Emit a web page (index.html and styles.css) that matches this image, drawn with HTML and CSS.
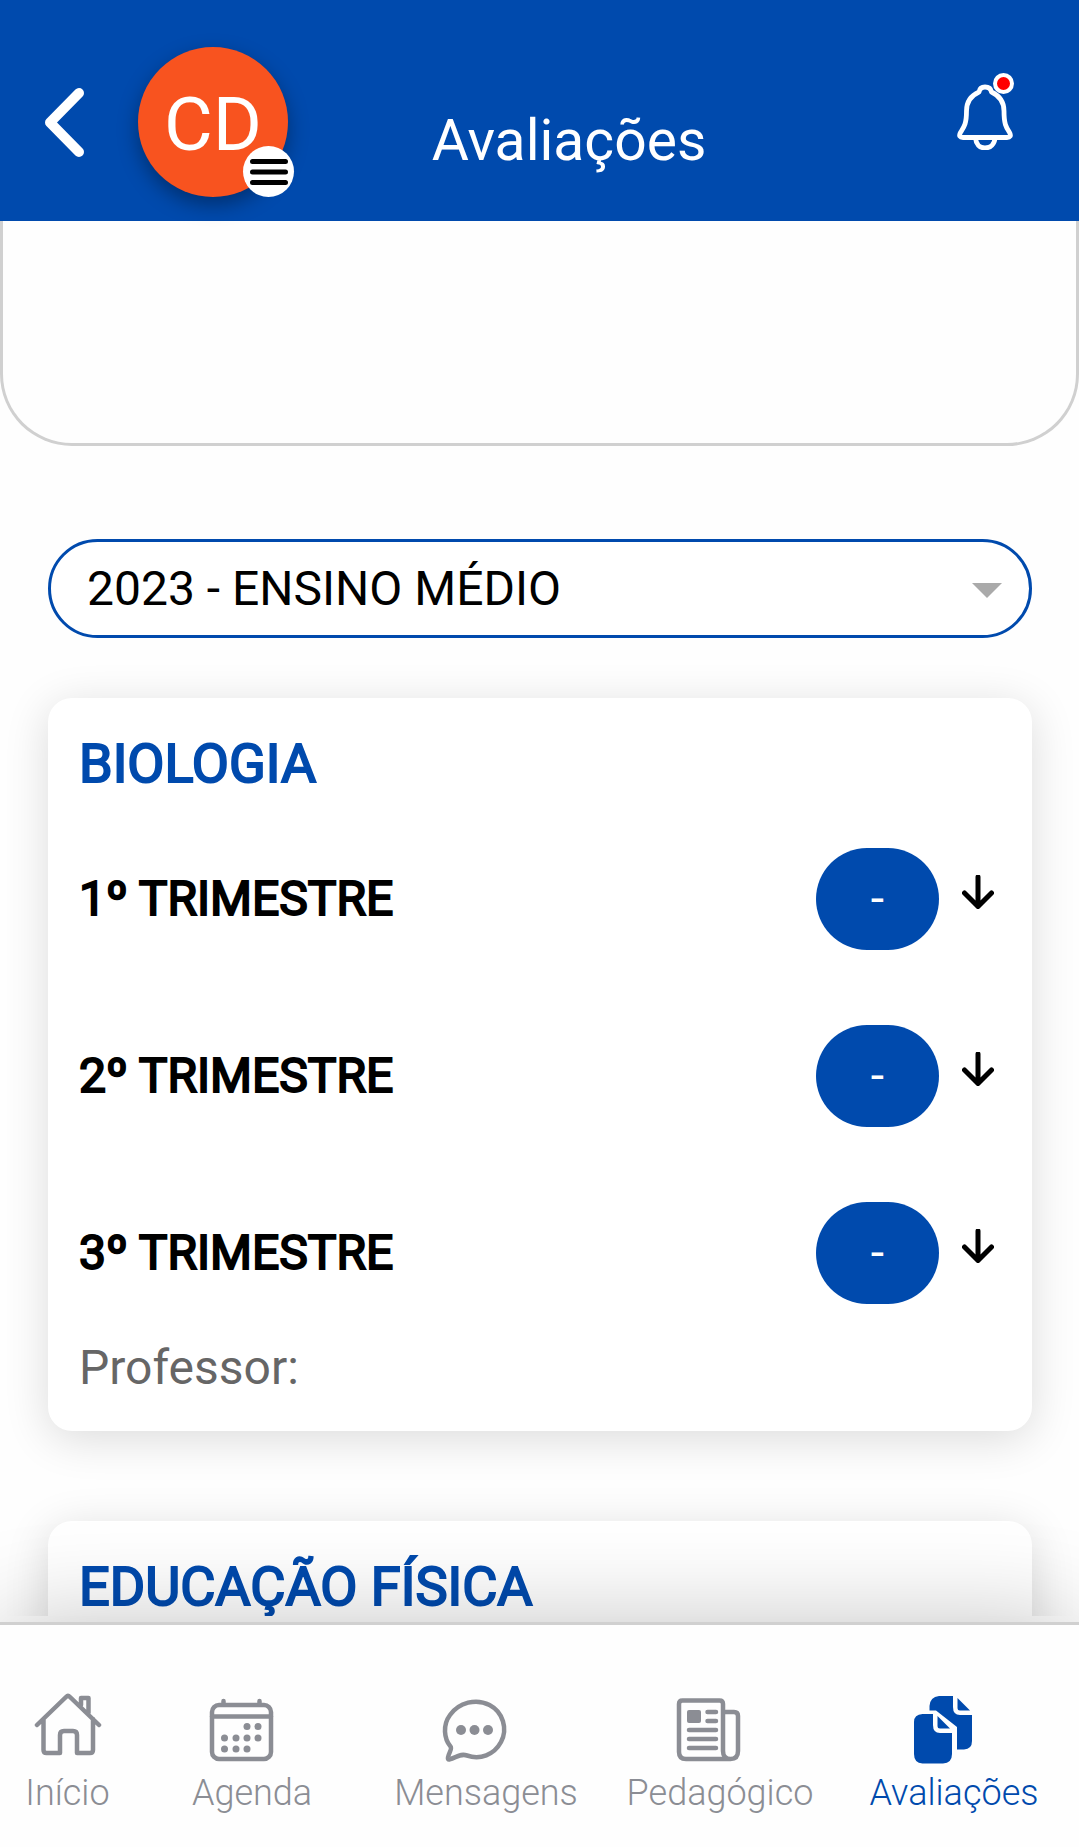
FILE: index.html
```html
<!DOCTYPE html>
<html lang="pt-BR">
<head>
<meta charset="utf-8">
<meta name="viewport" content="width=device-width, initial-scale=1">
<title>Avaliações</title>
<link rel="stylesheet" href="styles.css">
</head>
<body>
<header class="topbar">
  <div class="topbar-side">
    <button class="icon-button" type="button" aria-label="Voltar">
      <svg width="40" height="70" viewBox="0 0 40 70" fill="none" stroke="#fff" stroke-width="10" stroke-linecap="round" stroke-linejoin="round"><path d="M34 6L5 35.500L34 65"/></svg>
    </button>
    <button class="avatar" type="button" aria-label="Perfil CD">
      <span>CD</span>
      <span class="avatar-menu">
        <svg width="38" height="26" viewBox="0 0 38 26" stroke="#000" stroke-width="5" stroke-linecap="round"><path d="M2.500 2.500H35.500M2.500 13H35.500M2.500 23.500H35.500"/></svg>
      </span>
    </button>
  </div>
  <h1 class="topbar-title">Avaliações</h1>
  <div class="topbar-side topbar-end">
    <button class="icon-button" type="button" aria-label="Notificações">
      <svg width="60" height="78" viewBox="0 0 60 78" fill="none" stroke="#fff" stroke-width="4.800" stroke-linecap="round" stroke-linejoin="round"><path d="M28 15C24.500 15 22.500 17 22 20C13 24 9.500 30 9.500 39C9.500 52 7 55 3.500 60.500C1.500 64 3 65.500 6 65.500H50C53 65.500 54.500 64 52.500 60.500C49 55 47 52 47 39C47 30 43 24 34.500 20C34 17 31.500 15 28 15Z"/><path d="M18.500 66C19 72 22.500 76 28 76S37.500 72 38 66"/><circle cx="46.500" cy="11.500" r="8.500" fill="#f00" stroke-width="4"/></svg>
    </button>
  </div>
</header>

<main class="content">
  <section class="panel" aria-label="Resumo"></section>
  <div class="period">
    <select class="period-select" aria-label="Período letivo">
      <option>2023 - ENSINO MÉDIO</option>
    </select>
  </div>

  <article class="card">
    <h2 class="card-title">BIOLOGIA</h2>
    <ul class="terms">
      <li class="term">
        <span class="term-name">1º TRIMESTRE</span>
        <span class="grade">-</span>
        <button class="icon-button term-toggle" type="button" aria-label="Abrir 1º trimestre"><svg class="arrow" viewBox="0 0 32 34"><path d="M16 2V31M2.500 18L16 31.500L29.500 18"/></svg></button>
      </li>
      <li class="term">
        <span class="term-name">2º TRIMESTRE</span>
        <span class="grade">-</span>
        <button class="icon-button term-toggle" type="button" aria-label="Abrir 2º trimestre"><svg class="arrow" viewBox="0 0 32 34"><path d="M16 2V31M2.500 18L16 31.500L29.500 18"/></svg></button>
      </li>
      <li class="term">
        <span class="term-name">3º TRIMESTRE</span>
        <span class="grade">-</span>
        <button class="icon-button term-toggle" type="button" aria-label="Abrir 3º trimestre"><svg class="arrow" viewBox="0 0 32 34"><path d="M16 2V31M2.500 18L16 31.500L29.500 18"/></svg></button>
      </li>
    </ul>
    <p class="teacher">Professor:</p>
  </article>

  <article class="card">
    <h2 class="card-title">EDUCAÇÃO FÍSICA</h2>
  </article>
</main>

<nav class="tabs" aria-label="Principal">
  <a class="tab tab-home" href="#inicio">
    <svg class="tab-icon" viewBox="0 0 68 72" stroke-width="4.500"><path d="M3 33L32 5Q34 3 36 5L65 33M9.500 27V58Q9.500 61 12.500 61H26V43Q26 39 30 39H39Q43 39 43 43V61H56Q59 61 59 58V27M47 13V6H54.500V21"/></svg>
    <span>Início</span>
  </a>
  <a class="tab" href="#agenda">
    <svg class="tab-icon" viewBox="0 0 68 72" stroke-width="4.500"><rect x="5" y="13" width="59" height="54" rx="7"/><path d="M5 24.500H64M16.500 9V12M52.500 9V12"/><g class="solid"><circle cx="40" cy="34.500" r="3.500"/><circle cx="51" cy="34.500" r="3.500"/><circle cx="17.500" cy="46" r="3.500"/><circle cx="29" cy="46" r="3.500"/><circle cx="40" cy="46" r="3.500"/><circle cx="51" cy="46" r="3.500"/><circle cx="17.500" cy="57" r="3.500"/><circle cx="29" cy="57" r="3.500"/><circle cx="40" cy="57" r="3.500"/></g></svg>
    <span>Agenda</span>
  </a>
  <a class="tab" href="#mensagens">
    <svg class="tab-icon" viewBox="0 0 68 72" stroke-width="4.500"><path d="M9.500 54.500C3 47 1.500 33 9 23C18 10.500 35 6 48.500 13C62 20 67 37 60 50C53 63 39 68 26 63.500C20 61.500 17 64.500 8.500 67.500Q6.500 68 7 65.500C8 60 11.500 57 9.500 54.500Z"/><g class="solid"><circle cx="20" cy="38" r="5"/><circle cx="33.500" cy="38" r="5"/><circle cx="47" cy="38" r="5"/></g></svg>
    <span>Mensagens</span>
  </a>
  <a class="tab" href="#pedagogico">
    <svg class="tab-icon" viewBox="0 0 68 72" stroke-width="4.500"><path d="M55 67H11Q4 67 4 60V12Q4 8.500 7.500 8.500H44.500Q48 8.500 48 12V59Q48 67 55.500 67T63 59V24Q63 20 59 20H48"/><path d="M32.500 20H41M32.500 29H41M14 38H41M14 47H41M14 56H41"/><rect class="solid" x="12" y="18" width="14" height="13" rx="2"/></svg>
    <span>Pedagógico</span>
  </a>
  <a class="tab tab-active" href="#avaliacoes" aria-current="page">
    <svg class="tab-icon" viewBox="0 0 68 72"><g class="solid"><path d="M20.500 18.500V14Q21 5 30 4H44V15Q44 23 51 23H63V49Q63 57 55 57.500H48V35L27 18.500Z"/><path d="M48.500 6L61 18.500H51Q48.500 18.500 48.500 16Z"/><path d="M13.500 22H24V33Q24 41 31 41H43V62Q43 71 34 71.500H13.500Q5 71 5 62V30Q5 22.500 13.500 22Z"/><path d="M28.500 24L41 36.500H31Q28.500 36.500 28.500 34Z"/></g></svg>
    <span>Avaliações</span>
  </a>
</nav>
</body>
</html>
```
FILE: styles.css
```css
* {
  box-sizing: border-box;
}

body {
  display: flex;
  flex-direction: column;
  height: 100vh;
  margin: 0;
  background: #fefefe;
  color: #000;
  font-family: Roboto, "Liberation Sans", sans-serif;
}

.icon-button {
  display: flex;
  padding: 0;
  border: 0;
  background: none;
}

/* Top bar */
.topbar {
  display: grid;
  grid-template-columns: 1fr auto 1fr;
  flex: none;
  align-items: center;
  padding: 47px 62px 24px 45px;
  background: #004aad;
  color: #fff;
}

.topbar-side {
  display: flex;
  align-items: center;
  gap: 53px;
}

.topbar-end {
  justify-content: flex-end;
  padding-bottom: 22px;
}

.topbar-title {
  margin: 0;
  padding: 38px 0 0 76px;
  font-size: 57px;
  font-weight: 400;
  line-height: 64px;
}

.avatar {
  position: relative;
  width: 150px;
  height: 150px;
  padding: 3px 0 0;
  border: 0;
  border-radius: 50%;
  background: #f8531f;
  box-shadow: 0 8px 20px rgba(0, 0, 0, 0.35);
  color: #fff;
  font: 400 75px/84px Roboto, "Liberation Sans", sans-serif;
}

.avatar-menu {
  position: absolute;
  right: -6px;
  bottom: 0;
  display: grid;
  place-items: center;
  width: 51px;
  height: 51px;
  border-radius: 50%;
  background: #fff;
}

/* Scrolling content */
.content {
  flex: 1;
  min-height: 0;
  overflow: hidden;
}

.panel {
  height: 225px;
  border: 3px solid #d0d0d0;
  border-top: 0;
  border-radius: 0 0 72px 72px;
}

.period {
  position: relative;
  margin: 93px 47px 60px 48px;
}

.period::after {
  content: "";
  position: absolute;
  top: 44px;
  right: 30px;
  border: 15px solid transparent;
  border-top-color: #aaa;
  border-bottom: 0;
}

.period-select {
  display: block;
  width: 100%;
  height: 99px;
  padding: 0 36px;
  appearance: none;
  border: 3px solid #004aad;
  border-radius: 50px;
  background: #fff;
  color: #000;
  font: 400 48px/56px Roboto, "Liberation Sans", sans-serif;
}

.card {
  margin: 0 47px 90px 48px;
  padding: 32px 38px 31px 31px;
  border-radius: 24px;
  background: #fff;
  box-shadow: 0 8px 45px rgba(0, 0, 0, 0.14);
}

.card-title {
  margin: 0;
  color: #004aad;
  font-size: 54px;
  font-weight: 400;
  line-height: 68px;
  -webkit-text-stroke: 2px;
}

.terms {
  display: grid;
  gap: 75px;
  margin: 50px 0 32px;
  padding: 0;
  list-style: none;
}

.term {
  display: flex;
  align-items: center;
}

.term-name {
  flex: 1;
  font-size: 48px;
  line-height: 56px;
  -webkit-text-stroke: 2px;
}

.grade {
  width: 123px;
  border-radius: 51px;
  background: #004aad;
  color: #fff;
  font-size: 48px;
  line-height: 102px;
  text-align: center;
}

.term-toggle {
  margin-left: 23px;
  padding-bottom: 14px;
}

.arrow {
  width: 32px;
  height: 34px;
  fill: none;
  stroke: #000;
  stroke-width: 5px;
  stroke-linecap: round;
  stroke-linejoin: round;
}

.teacher {
  margin: 0;
  color: #666;
  font-size: 48px;
  line-height: 64px;
}

/* Bottom navigation */
.tabs {
  position: relative;
  display: grid;
  grid-template-columns: 135px repeat(4, 1fr);
  flex: none;
  margin-top: 6px;
  padding: 67px 8px 32px 0;
  border-top: 3px solid #d0d0d0;
  background: #fefefe;
  box-shadow: 0 0 100px rgba(0, 0, 0, 0.23);
}

.tab {
  display: flex;
  flex-direction: column;
  align-items: center;
  gap: 7px;
  color: #8b8d94;
  font-size: 36px;
  font-weight: 300;
  line-height: 44px;
  text-decoration: none;
}

.tab-active {
  color: #004aad;
}

.tab-icon {
  width: 68px;
  height: 72px;
  margin-right: 23px;
  fill: none;
  stroke: currentColor;
  stroke-linecap: round;
  stroke-linejoin: round;
}

.tab-home .tab-icon {
  margin-right: 0;
}

.tab-icon .solid {
  fill: currentColor;
  stroke: none;
}
```
